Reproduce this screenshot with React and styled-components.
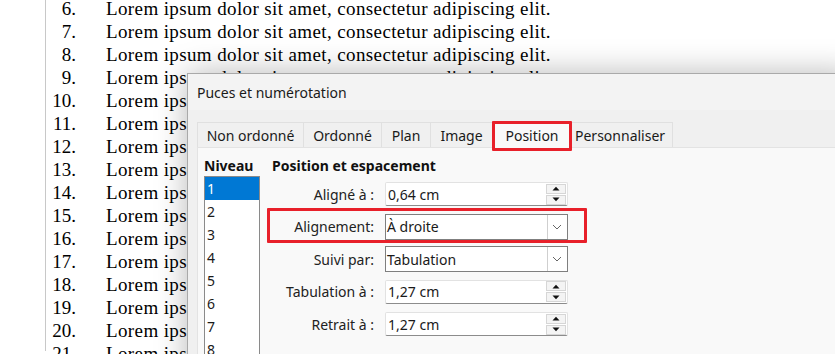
import React from 'react';
import styled, { createGlobalStyle } from 'styled-components';

const Global = createGlobalStyle`
  html, body { margin: 0; padding: 0; background: #fff; overflow: hidden; }
  #root { width: 835px; height: 354px; }
`;

const Screen = styled.div`
  position: relative;
  width: 835px;
  height: 354px;
  overflow: hidden;
  background: #fff;
`;

const Doc = styled.div`
  margin-left: 45px;
  height: 100%;
  border-left: 1px solid #c8c8c8;
`;

const List = styled.ol`
  list-style: none;
  margin: -3px 0 0;
  padding: 0;
  font-family: "Liberation Serif", "Times New Roman", serif;
  font-size: 19px;
  letter-spacing: 0.38px;
  line-height: 23px;
  color: #000;
`;

const Item = styled.li`
  display: grid;
  grid-template-columns: 30px 1fr;
  column-gap: 30px;
  white-space: nowrap;
`;

const Num = styled.span`
  text-align: right;
  letter-spacing: 0;
`;

const Dialog = styled.div`
  position: absolute;
  left: 187px;
  top: 73px;
  right: -20px;
  bottom: -40px;
  background: #f0f0f0;
  border: 1px solid #a9a9a9;
  box-shadow: 0 0 30px rgba(0, 0, 0, 0.28);
  font-family: "Noto Sans", "Open Sans", sans-serif;
  font-size: 14px;
  color: #1a1a1a;
  display: flex;
  flex-direction: column;
`;

const TitleBar = styled.div`
  height: 36px;
  background: #f3f3f3;
  display: flex;
  align-items: center;
  padding-left: 9px;
  font-size: 14px;
`;

const TabStrip = styled.div`
  display: flex;
  align-items: flex-end;
  padding: 11px 0 0 10px;
  height: 26px;
  box-sizing: content-box;
`;

const Tab = styled.div`
  position: relative;
  width: ${p => p.$w}px;
  height: ${p => (p.$active ? 27 : 25)}px;
  box-sizing: border-box;
  padding-left: ${p => (p.$left ? 3 : 0)}px;
  display: flex;
  align-items: center;
  justify-content: ${p => (p.$left ? 'flex-start' : 'center')};
  background: ${p => (p.$active ? '#f9f9f9' : '#f0f0f0')};
  border: 1px solid #e0e0e0;
  border-bottom: none;
  margin-left: -1px;
  margin-bottom: ${p => (p.$active ? -1 : 0)}px;
  z-index: ${p => (p.$active ? 2 : 1)};
  white-space: nowrap;

  ${p =>
    p.$marked &&
    `&::after {
      content: '';
      position: absolute;
      left: -1px;
      right: -1px;
      top: -1px;
      bottom: -3px;
      border: 3px solid #e8202a;
      border-radius: 1px;
    }`}
`;

const Panel = styled.div`
  flex: 1;
  margin-left: 9px;
  background: #f9f9f9;
  border-top: 1px solid #e3e3e3;
  border-left: 1px solid #e3e3e3;
  display: flex;
  gap: 12px;
  padding: 8px 0 0 6px;
`;

const Column = styled.div`
  display: flex;
  flex-direction: column;
  width: ${p => p.$w || 'auto'};
`;

const Heading = styled.div`
  font-weight: 700;
  font-size: 14px;
  line-height: 20px;
  color: #111;
`;

const LevelList = styled.div`
  border: 1px solid #8a8a8a;
  background: #fff;
  width: 56px;
  box-sizing: border-box;
  height: 200px;
`;

const Level = styled.div`
  height: 23px;
  line-height: 23px;
  padding-left: 2px;
  background: ${p => (p.$sel ? '#0078d4' : 'transparent')};
  color: ${p => (p.$sel ? '#fff' : '#1a1a1a')};
`;

const Form = styled.div`
  display: grid;
  grid-template-columns: 102px 183px;
  column-gap: 11px;
  grid-auto-rows: 32.5px;
  margin-top: 2px;
`;

const Row = styled.div`
  display: contents;
`;

const Label = styled.div`
  position: relative;
  display: flex;
  align-items: center;
  justify-content: flex-end;
  white-space: nowrap;
  color: #222;

  ${p =>
    p.$marked &&
    `&::after {
      content: '';
      position: absolute;
      left: -5px;
      top: -3px;
      bottom: 0px;
      width: 314px;
      border: 3px solid #e8202a;
      border-radius: 1px;
      z-index: 3;
      pointer-events: none;
    }`}
`;

const FieldCell = styled.div`
  display: flex;
  align-items: center;
`;

const SpinField = styled.div`
  width: 100%;
  height: 24px;
  box-sizing: border-box;
  background: #fff;
  border: 1px solid #e2e2e2;
  border-bottom: 1px solid #8c8c8c;
  border-radius: 2px;
  display: flex;
  align-items: center;
  justify-content: space-between;
  padding: 0 0 0 2px;
`;

const Spin = styled.div`
  display: flex;
  flex-direction: column;
  margin-right: 1px;
  gap: 1px;
`;

const SpinBtn = styled.div`
  width: 20px;
  height: 10px;
  box-sizing: border-box;
  background: #f4f4f4;
  border: 1px solid #d6d6d6;
  display: flex;
  align-items: center;
  justify-content: center;
`;

const Combo = styled.div`
  width: 100%;
  height: 26px;
  box-sizing: border-box;
  background: #fff;
  border: 1px solid #7f7f7f;
  display: flex;
  align-items: center;
  justify-content: space-between;
  padding-left: 1px;
`;

const DropBtn = styled.div`
  width: 19px;
  height: 24px;
  box-sizing: border-box;
  border-left: 1px solid #cfcfcf;
  display: flex;
  align-items: center;
  justify-content: center;
  margin-right: 1px;
`;

const Tri = ({ up }) => (
  <svg width="8" height="5" viewBox="0 0 8 5">
    {up ? <path d="M0.5 4.5 L4 0.8 L7.5 4.5 Z" fill="#111" /> : <path d="M0.5 0.5 L4 4.2 L7.5 0.5 Z" fill="#111" />}
  </svg>
);

const Chevron = () => (
  <svg width="10" height="6" viewBox="0 0 10 6">
    <path d="M1 1 L5 5 L9 1" fill="none" stroke="#666" strokeWidth="1" />
  </svg>
);

const SpinInput = ({ value }) => (
  <SpinField>
    <span>{value}</span>
    <Spin>
      <SpinBtn><Tri up /></SpinBtn>
      <SpinBtn><Tri /></SpinBtn>
    </Spin>
  </SpinField>
);

const Select = ({ value }) => (
  <Combo>
    <span>{value}</span>
    <DropBtn><Chevron /></DropBtn>
  </Combo>
);

const lines = Array.from({ length: 16 }, (_, i) => i + 6);
const tabs = [
  { t: 'Non ordonné', w: 107 },
  { t: 'Ordonné', w: 79 },
  { t: 'Plan', w: 50 },
  { t: 'Image', w: 63 },
  { t: 'Position', w: 80, active: true },
  { t: 'Personnaliser', w: 102, left: true },
];

export default function App() {
  return (
    <Screen>
      <Global />
      <Doc>
        <List>
          {lines.map(n => (
            <Item key={n}>
              <Num>{n}.</Num>
              <span>Lorem ipsum dolor sit amet, consectetur adipiscing elit.</span>
            </Item>
          ))}
        </List>
      </Doc>
      <Dialog>
        <TitleBar>Puces et numérotation</TitleBar>
        <TabStrip>
          {tabs.map(tb => (
            <Tab key={tb.t} $w={tb.w} $active={tb.active} $marked={tb.active} $left={tb.left}>
              {tb.t}
            </Tab>
          ))}
        </TabStrip>
        <Panel>
          <Column $w="56px">
            <Heading>Niveau</Heading>
            <LevelList>
              {[1, 2, 3, 4, 5, 6, 7, 8].map(l => (
                <Level key={l} $sel={l === 1}>{l}</Level>
              ))}
            </LevelList>
          </Column>
          <Column>
            <Heading>Position et espacement</Heading>
            <Form>
              <Row>
                <Label>Aligné à :</Label>
                <FieldCell><SpinInput value="0,64 cm" /></FieldCell>
              </Row>
              <Row>
                <Label $marked>Alignement:</Label>
                <FieldCell><Select value="À droite" /></FieldCell>
              </Row>
              <Row>
                <Label>Suivi par:</Label>
                <FieldCell><Select value="Tabulation" /></FieldCell>
              </Row>
              <Row>
                <Label>Tabulation à :</Label>
                <FieldCell><SpinInput value="1,27 cm" /></FieldCell>
              </Row>
              <Row>
                <Label>Retrait à :</Label>
                <FieldCell><SpinInput value="1,27 cm" /></FieldCell>
              </Row>
            </Form>
          </Column>
        </Panel>
      </Dialog>
    </Screen>
  );
}
